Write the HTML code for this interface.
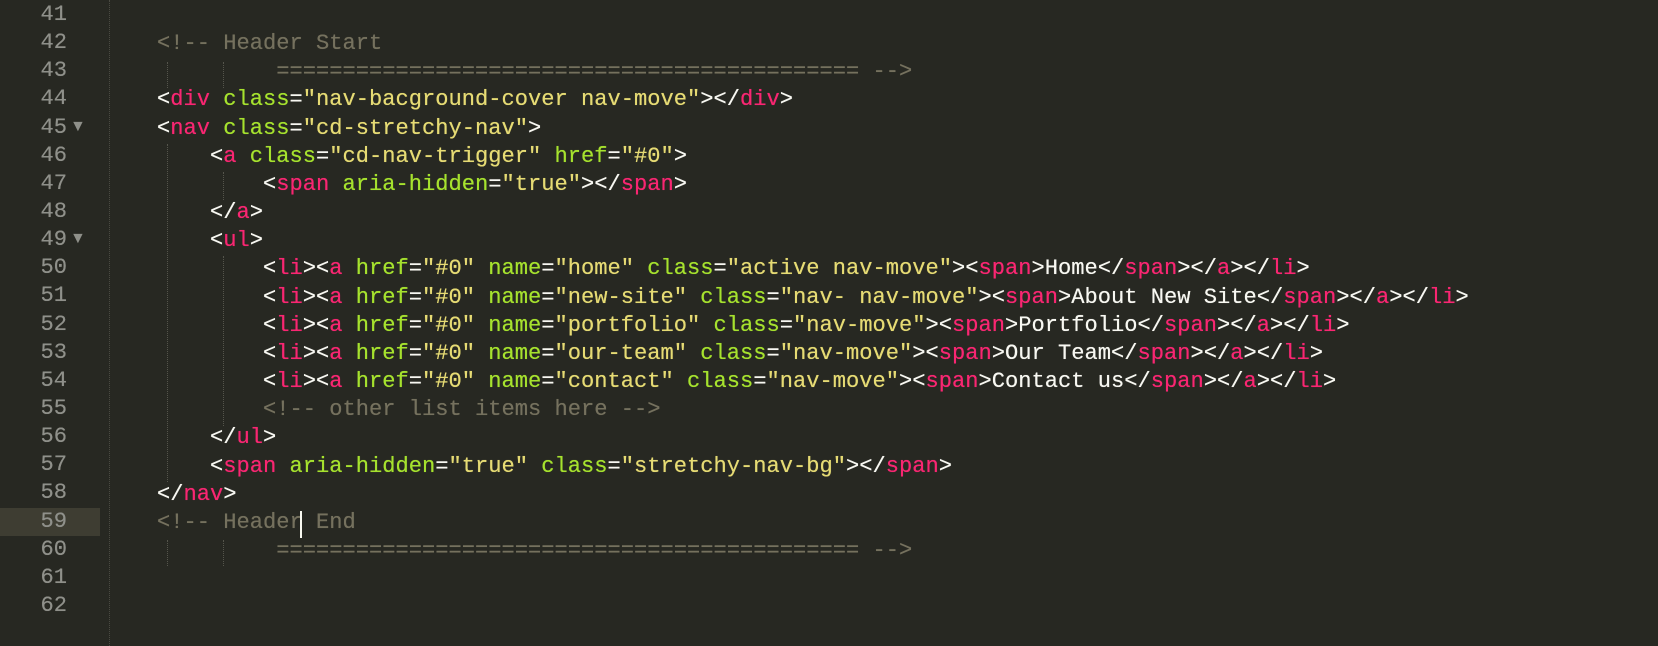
<!DOCTYPE html>
<html><head><meta charset="utf-8"><style>
html,body{margin:0;padding:0;background:#272822;width:1658px;height:646px;overflow:hidden}
.wrap{position:relative;width:1658px;height:646px}
.gut{position:absolute;left:0;top:2px;width:100px}
.ln{height:28.15px;line-height:28.15px;font:22.08px "Liberation Mono",monospace;color:#8f908a;text-align:right;width:67px;position:relative;text-shadow:0 0 0.4px #8f908a}
.hl{position:absolute;left:0;width:100px;height:28px;background:#3e3d32}
.sep{position:absolute;left:109px;top:0;height:646px;border-left:1px dotted #4a4a42}
pre{position:absolute;left:157px;top:2px;margin:0;font:22.08px "Liberation Mono",monospace;line-height:28.15px;color:#f8f8f2;text-shadow:0 0 0.5px currentColor}
.t{color:#f92672}.a{color:#a6e22e}.s{color:#e6db74}.c{color:#75715e}
.g{position:absolute;border-left:1px dotted #55554c;width:0}
.arr{position:absolute;left:70px;color:#8f908a;font-size:16px}
.cur{position:absolute;left:300px;top:511px;width:2px;height:27px;background:#f8f8f0}
</style></head><body><div class="wrap">
<div class="hl" style="top:508px"></div>
<div class="sep"></div>
<div class="gut">
<div class="ln">41</div><div class="ln">42</div><div class="ln">43</div><div class="ln">44</div><div class="ln">45</div><div class="ln">46</div><div class="ln">47</div><div class="ln">48</div><div class="ln">49</div><div class="ln">50</div><div class="ln">51</div><div class="ln">52</div><div class="ln">53</div><div class="ln">54</div><div class="ln">55</div><div class="ln">56</div><div class="ln">57</div><div class="ln">58</div><div class="ln">59</div><div class="ln">60</div><div class="ln">61</div><div class="ln">62</div>
</div>
<div class="arr" style="top:118px">▼</div>
<div class="arr" style="top:230px">▼</div>
<div class="g" style="left:167px;top:62px;height:26px"></div>
<div class="g" style="left:223px;top:62px;height:26px"></div>
<div class="g" style="left:167px;top:540px;height:26px"></div>
<div class="g" style="left:223px;top:540px;height:26px"></div>
<div class="g" style="left:167px;top:144px;height:338px"></div>
<div class="g" style="left:223px;top:172px;height:28px"></div>
<div class="g" style="left:223px;top:256px;height:170px"></div>
<pre>

<span class="c">&lt;!-- Header Start</span>
<span class="c">         ============================================ --&gt;</span>
&lt;<span class="t">div</span> <span class="a">class</span>=<span class="s">"nav-bacground-cover nav-move"</span>&gt;&lt;/<span class="t">div</span>&gt;
&lt;<span class="t">nav</span> <span class="a">class</span>=<span class="s">"cd-stretchy-nav"</span>&gt;
    &lt;<span class="t">a</span> <span class="a">class</span>=<span class="s">"cd-nav-trigger"</span> <span class="a">href</span>=<span class="s">"#0"</span>&gt;
        &lt;<span class="t">span</span> <span class="a">aria-hidden</span>=<span class="s">"true"</span>&gt;&lt;/<span class="t">span</span>&gt;
    &lt;/<span class="t">a</span>&gt;
    &lt;<span class="t">ul</span>&gt;
        &lt;<span class="t">li</span>&gt;&lt;<span class="t">a</span> <span class="a">href</span>=<span class="s">"#0"</span> <span class="a">name</span>=<span class="s">"home"</span> <span class="a">class</span>=<span class="s">"active nav-move"</span>&gt;&lt;<span class="t">span</span>&gt;Home&lt;/<span class="t">span</span>&gt;&lt;/<span class="t">a</span>&gt;&lt;/<span class="t">li</span>&gt;
        &lt;<span class="t">li</span>&gt;&lt;<span class="t">a</span> <span class="a">href</span>=<span class="s">"#0"</span> <span class="a">name</span>=<span class="s">"new-site"</span> <span class="a">class</span>=<span class="s">"nav- nav-move"</span>&gt;&lt;<span class="t">span</span>&gt;About New Site&lt;/<span class="t">span</span>&gt;&lt;/<span class="t">a</span>&gt;&lt;/<span class="t">li</span>&gt;
        &lt;<span class="t">li</span>&gt;&lt;<span class="t">a</span> <span class="a">href</span>=<span class="s">"#0"</span> <span class="a">name</span>=<span class="s">"portfolio"</span> <span class="a">class</span>=<span class="s">"nav-move"</span>&gt;&lt;<span class="t">span</span>&gt;Portfolio&lt;/<span class="t">span</span>&gt;&lt;/<span class="t">a</span>&gt;&lt;/<span class="t">li</span>&gt;
        &lt;<span class="t">li</span>&gt;&lt;<span class="t">a</span> <span class="a">href</span>=<span class="s">"#0"</span> <span class="a">name</span>=<span class="s">"our-team"</span> <span class="a">class</span>=<span class="s">"nav-move"</span>&gt;&lt;<span class="t">span</span>&gt;Our Team&lt;/<span class="t">span</span>&gt;&lt;/<span class="t">a</span>&gt;&lt;/<span class="t">li</span>&gt;
        &lt;<span class="t">li</span>&gt;&lt;<span class="t">a</span> <span class="a">href</span>=<span class="s">"#0"</span> <span class="a">name</span>=<span class="s">"contact"</span> <span class="a">class</span>=<span class="s">"nav-move"</span>&gt;&lt;<span class="t">span</span>&gt;Contact us&lt;/<span class="t">span</span>&gt;&lt;/<span class="t">a</span>&gt;&lt;/<span class="t">li</span>&gt;
        <span class="c">&lt;!-- other list items here --&gt;</span>
    &lt;/<span class="t">ul</span>&gt;
    &lt;<span class="t">span</span> <span class="a">aria-hidden</span>=<span class="s">"true"</span> <span class="a">class</span>=<span class="s">"stretchy-nav-bg"</span>&gt;&lt;/<span class="t">span</span>&gt;
&lt;/<span class="t">nav</span>&gt;
<span class="c">&lt;!-- Header End</span>
<span class="c">         ============================================ --&gt;</span>
</pre>
<div class="cur"></div>
</div></body></html>
